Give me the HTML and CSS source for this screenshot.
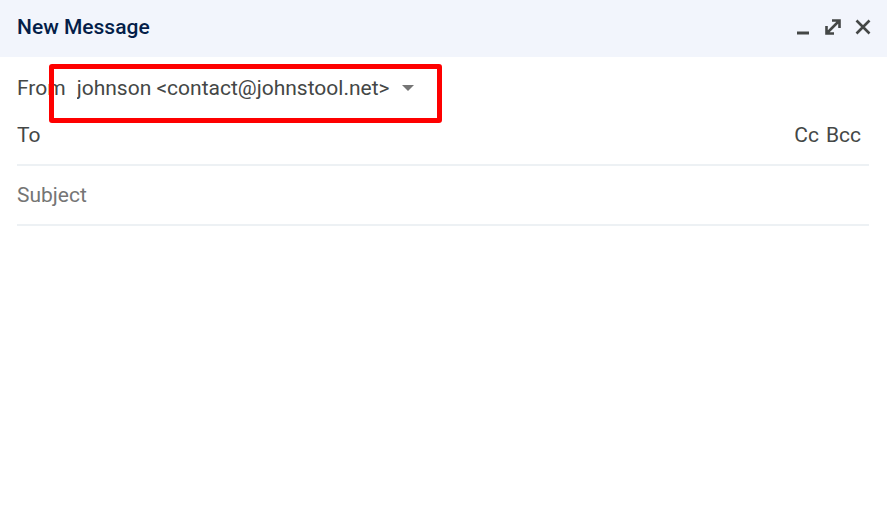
FILE: index.html
```html
<!DOCTYPE html>
<html lang="en">
<head>
<meta charset="utf-8">
<title>New Message</title>
<link rel="stylesheet" href="styles.css">
</head>
<body>
<form class="compose">
  <header class="titlebar">
    <h1 class="title">New Message</h1>
    <div class="actions">
      <button type="button" class="icon" aria-label="Minimize"><svg viewBox="0 0 20 20"><path d="M4 16h12"/></svg></button>
      <button type="button" class="icon" aria-label="Full screen"><svg viewBox="0 0 20 20"><path stroke-width="2.600" d="M9 3.500h7.500V11M16.500 3.500l-13 13M3.500 9v7.500H11"/></svg></button>
      <button type="button" class="icon" aria-label="Close"><svg viewBox="0 0 20 20"><path stroke-width="2.600" d="M3.500 3.500l13 13M16.500 3.500l-13 13"/></svg></button>
    </div>
  </header>
  <div class="fields">
    <div class="row from">
      <label for="from">From</label>
      <div class="picker">
        <select id="from"><option>johnson &lt;contact@johnstool.net&gt;</option></select>
        <svg class="caret" viewBox="0 0 12 6"><path d="M0 0h12L6 6z"/></svg>
        <span class="highlight"></span>
      </div>
    </div>
    <div class="row to">
      <label for="to">To</label>
      <input id="to" type="text">
      <button type="button" class="copy">Cc</button>
      <button type="button" class="copy">Bcc</button>
    </div>
    <div class="row subject">
      <input type="text" placeholder="Subject" aria-label="Subject">
    </div>
  </div>
  <textarea class="message" aria-label="Message body"></textarea>
</form>
</body>
</html>
```
FILE: styles.css
```css
* { box-sizing: border-box; }
body {
  margin: 0;
  background: #fff;
  color: #444746;
  font: 400 21px/28px Roboto, sans-serif;
}
.compose { display: flex; flex-direction: column; min-height: 100vh; }
.titlebar {
  display: flex;
  align-items: center;
  justify-content: space-between;
  height: 57px;
  padding: 0 14px 3px 17px;
  background: #f2f5fc;
}
.title { margin: 0; color: #041e49; font-size: 21px; font-weight: 500; }
.actions { display: flex; gap: 10px; }
button, input, select, textarea {
  margin: 0;
  padding: 0;
  border: 0;
  outline: 0;
  background: none;
  color: inherit;
  font: inherit;
}
.icon { width: 20px; height: 20px; }
.icon svg { display: block; fill: none; stroke: #444746; stroke-width: 3px; }
.icon path[stroke-width] { vector-effect: none; }
.fields { padding: 0 18px 0 17px; }
.row { display: flex; align-items: center; }
.from { gap: 11px; height: 61px; }
.picker { position: relative; display: flex; align-items: center; gap: 12px; }
select { appearance: none; }
.caret { width: 12px; height: 6px; fill: #757575; }
.highlight {
  position: absolute;
  inset: -10px -28px -21px -28px;
  border: 5px solid #fe0000;
  border-radius: 3px;
  pointer-events: none;
}
.to { gap: 7px; height: 48px; padding-right: 8px; padding-bottom: 12px; border-bottom: 2px solid #edf1f4; }
.subject { height: 60px; border-bottom: 2px solid #edf1f4; }
input { flex: 1; min-width: 0; }
input::placeholder { color: #757575; opacity: 1; }
.message { flex: 1; margin: 16px 18px 16px 17px; resize: none; }
```
